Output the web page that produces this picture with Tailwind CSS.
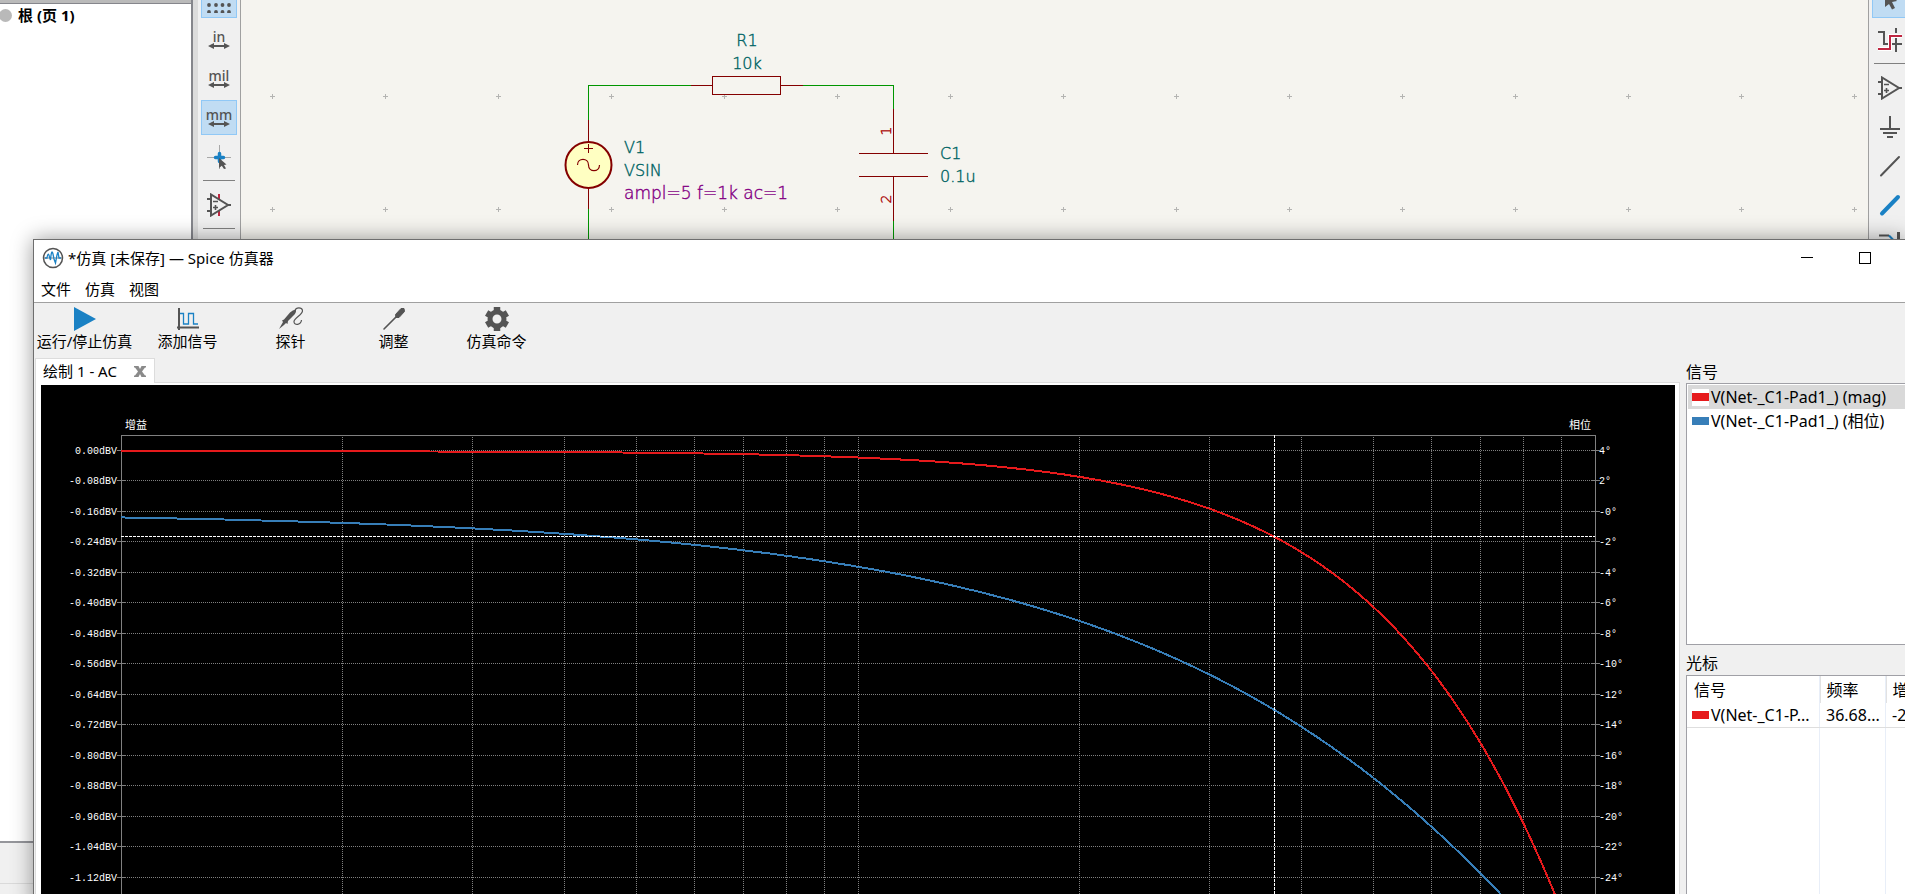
<!DOCTYPE html>
<html lang="zh-CN">
<head>
  <meta charset="UTF-8" />
  <title>Spice 仿真器</title>
  <script src="https://cdn.jsdelivr.net/npm/@tailwindcss/browser@4"></script>
</head>
<body class="relative h-screen overflow-hidden bg-[#f0f0f0] text-[15px] leading-5 text-black font-['Noto_Sans','Noto_Sans_CJK_SC',sans-serif]">

  <!-- 原理图编辑器 -->
  <main class="flex h-full">
    <!-- 层次面板 -->
    <aside class="flex w-[193px] flex-none flex-col border-r-2 border-[#85868c]">
      <div class="h-1 border-b border-[#85868c] bg-[#bababa]"></div>
      <div class="flex-1 bg-white">
        <div class="flex items-center gap-[6px] pt-px font-bold">
          <span class="-ml-[1px] h-[13px] w-[13px] rounded-full bg-[#b9b9b9]"></span>
          <span>根 (页 1)</span>
        </div>
      </div>
      <div class="h-[53px] flex-none border-t-2 border-[#95969b]">
        <div class="mt-10 border-t border-[#dadada]"></div>
      </div>
    </aside>
    <div class="w-[5px] flex-none bg-[#dcdcdc]"></div>

    <!-- 左侧工具栏 -->
    <div class="flex w-[43px] flex-none flex-col items-center border-r border-[#a0a0a0]">
      <div class="-mt-[17px] flex flex-col items-center gap-1 text-[#545454]">
        <button aria-label="网格" class="flex h-[35px] w-9 items-center justify-center border border-[#90c8f6] bg-[#c0dcf3]">
          <svg width="24" height="24" fill="#545454">
            <g id="dots">
              <circle cx="2" cy="16" r="1.9" /><circle cx="9" cy="16" r="1.9" /><circle cx="15.500" cy="16" r="1.9" /><circle cx="22" cy="16" r="1.9" />
            </g>
            <use href="#dots" y="7" /><use href="#dots" y="-7" /><use href="#dots" y="-14" />
          </svg>
        </button>
        <button class="flex h-[35px] w-9 flex-col items-center justify-center text-[14px] leading-3 font-medium">in
          <svg width="22" height="6" fill="#545454"><path d="M0 3 L6 0 V2 H16 V0 L22 3 L16 6 V4 H6 V6Z" /></svg>
        </button>
        <button class="flex h-[35px] w-9 flex-col items-center justify-center text-[14px] leading-3 font-medium">mil
          <svg width="22" height="6" fill="#545454"><path d="M0 3 L6 0 V2 H16 V0 L22 3 L16 6 V4 H6 V6Z" /></svg>
        </button>
        <button class="flex h-[35px] w-9 flex-col items-center justify-center border border-[#90c8f6] bg-[#c0dcf3] text-[14px] leading-3 font-medium">mm
          <svg width="22" height="6" fill="#545454"><path d="M0 3 L6 0 V2 H16 V0 L22 3 L16 6 V4 H6 V6Z" /></svg>
        </button>
        <button aria-label="光标形状" class="flex h-[35px] w-9 items-center justify-center">
          <svg width="24" height="24">
            <path d="M12.500 0 V24 M0 12.500 H24" stroke="#a8a8a8" />
            <path d="M12.500 8.500 V16.500 M8.500 12.500 H16.500" stroke="#1a81c4" stroke-width="3.500" stroke-linecap="round" />
            <path d="M12 13 L19.500 19.500 L17 20 L19 23.500 L17 24 L14.800 20.800 L12 23Z" fill="#545454" />
          </svg>
        </button>
        <div class="my-[2px] h-px w-8 bg-[#808080]"></div>
        <button aria-label="隐藏引脚" class="flex h-[35px] w-9 items-center justify-center">
          <svg width="24" height="24" fill="none" stroke="#545454" stroke-width="2">
            <path d="M12 1 V6 M12 18 V23" stroke="#bf2641" />
            <path d="M0 6 H4 M0 18 H4 M4 1.500 V22.500 L21 12Z M20 12 H24" />
            <path d="M6 8.500 H11 M6 14.500 H11 M8.500 12 V17" stroke-width="1.600" />
          </svg>
        </button>
        <div class="my-[2px] h-px w-8 bg-[#808080]"></div>
      </div>
    </div>

    <!-- 画布 -->
    <section class="min-w-0 flex-1 bg-[#f5f4ef]">
      <svg class="h-full w-full font-extralight font-['DejaVu_Sans',sans-serif]" fill="none" shape-rendering="crispEdges">
        <pattern id="grid" x="26" y="91" width="113" height="113" patternUnits="userSpaceOnUse">
          <path d="M3 5.500 H8 M5.500 3 V8" stroke="#b4b4b2" />
        </pattern>
        <rect width="100%" height="100%" fill="url(#grid)" />
        <path d="M347.500 120 V85.500 H450 M562 85.500 H652.500 V109 M347.500 209 V300 M652.500 221 V300" stroke="#009600" />
        <g stroke="#840000">
          <path d="M450 85.500 H471 M540 85.500 H562 M347.500 120 V142 M347.500 188 V209" />
          <rect x="471.500" y="76.500" width="68" height="18" />
          <path d="M652.500 109 V153 M618 153.500 H687 M618 176.500 H687 M652.500 177 V221" />
          <circle cx="347.500" cy="165" r="23" fill="#ffffc2" stroke-width="2" shape-rendering="auto" />
          <path d="M347.500 144 V153 M343 148.500 H352" />
          <path d="M336.500 165 C336.500 157.500 347.500 157.500 347.500 165 S358.500 172.500 358.500 165" shape-rendering="auto" stroke-width="1.200" />
        </g>
        <g fill="#006464" stroke="#006464" stroke-width="0.400" font-size="16">
          <text x="506" y="46" text-anchor="middle">R1</text>
          <text x="506" y="69" text-anchor="middle">10k</text>
          <text x="383" y="153">V1</text>
          <text x="383" y="176">VSIN</text>
          <text x="699" y="159">C1</text>
          <text x="699" y="182">0.1u</text>
        </g>
        <text x="383" y="199" fill="#840084" stroke="#840084" stroke-width="0.400" font-size="17">ampl=5 f=1k ac=1</text>
        <g fill="#a90000" stroke="#a90000" stroke-width="0.400" font-size="14" text-anchor="middle">
          <text transform="translate(650 131) rotate(-90)">1</text>
          <text transform="translate(650 199) rotate(-90)">2</text>
        </g>
      </svg>
    </section>

    <!-- 右侧工具栏 -->
    <div class="w-[37px] flex-none border-l border-[#a0a0a0] pl-[3px]">
      <div class="-mt-[17px] flex w-9 flex-col items-center gap-1">
        <button aria-label="选择" class="flex h-[35px] w-9 items-center justify-center border border-[#90c8f6] bg-[#c0dcf3]">
          <svg width="24" height="24"><path d="M7 -1 L19 12 L14 13 L17 19 L14 20.500 L11 15 L7 18Z" fill="#545454" /></svg>
        </button>
        <button aria-label="高亮网络" class="flex h-[35px] w-9 items-center justify-center">
          <svg width="24" height="24" fill="none" stroke="#545454" stroke-width="2">
            <path d="M0 4 H6 V16 H10 M18 0 V5 M18 10 V24 M14 16 H24" />
            <path d="M0 21 H12 V8 H24" stroke="#fff" stroke-width="4" />
            <path d="M0 21 H12 V8 H24" stroke="#bf2641" />
          </svg>
        </button>
        <div class="my-[2px] h-px w-8 bg-[#808080]"></div>
        <button aria-label="放置符号" class="flex h-[35px] w-9 items-center justify-center">
          <svg width="24" height="24" fill="none" stroke="#545454" stroke-width="2">
            <path d="M0 6 H4 M0 18 H4 M4 1.500 V22.500 L21 12Z M20 12 H24" />
            <path d="M6 8.500 H11 M6 14.500 H11 M8.500 12 V17" stroke-width="1.600" />
          </svg>
        </button>
        <button aria-label="放置电源" class="flex h-[35px] w-9 items-center justify-center">
          <svg width="24" height="24" stroke="#545454" stroke-width="2"><path d="M12 1 V14 M2 14 H22 M5 18 H19 M9 22 H15" /></svg>
        </button>
        <button aria-label="导线" class="flex h-[35px] w-9 items-center justify-center">
          <svg width="24" height="24" stroke="#545454" stroke-width="2" stroke-linecap="round"><path d="M3 21.500 L21 3" /></svg>
        </button>
        <button aria-label="总线" class="flex h-[35px] w-9 items-center justify-center">
          <svg width="24" height="24" stroke="#1a81c4" stroke-width="4" stroke-linecap="round"><path d="M4 20.500 L20 4" /></svg>
        </button>
        <button aria-label="总线入口" class="flex h-[35px] w-9 items-center justify-center">
          <svg width="24" height="24" fill="none" stroke="#545454" stroke-width="2">
            <path d="M1 3.500 H11" /><path d="M11 3.500 L19 12" stroke="#1a81c4" /><path d="M20.500 0 V24" stroke-width="3" />
          </svg>
        </button>
      </div>
    </div>
  </main>

  <!-- 仿真器窗口 -->
  <div class="absolute -bottom-4 left-[33px] right-0 top-[239px] flex flex-col border-l border-t border-[#6e6e6e] bg-[#f0f0f0] shadow-[0_0_20px_rgba(0,0,0,0.4)]">
    <!-- 标题栏 -->
    <header class="flex h-[37px] flex-none items-center gap-1 bg-white pb-[2px] pl-2 pr-[34px]">
      <svg width="22" height="22" fill="none">
        <circle cx="11" cy="11" r="9.500" stroke="#545454" stroke-width="1.500" />
        <path d="M2 11 H20" stroke="#545454" stroke-width="0.700" />
        <path d="M3 11 H5 Q6 4 7.500 10 L8.500 13 Q9.500 1 11 7 L12 12 L13.500 16 L15 8 L16 5 L17 11 H19" stroke="#1a81c4" stroke-width="1.300" />
      </svg>
      <h1 class="flex-1">*仿真 [未保存] — Spice 仿真器</h1>
      <div class="flex gap-[46px]">
        <button aria-label="最小化" class="flex h-3 w-3 items-center"><span class="h-px w-3 bg-black"></span></button>
        <button aria-label="最大化" class="h-3 w-3 border border-black"></button>
      </div>
    </header>

    <!-- 菜单 -->
    <nav class="flex h-[26px] flex-none items-center gap-[14px] border-b border-[#a0a0a0] bg-white pb-[2px] pl-[7px]">
      <button>文件</button>
      <button>仿真</button>
      <button>视图</button>
    </nav>

    <!-- 工具栏 -->
    <div class="-ml-px flex h-[55px] flex-none pt-1 [&>button]:flex [&>button]:w-[103px] [&>button]:flex-col [&>button]:items-center">
      <button>
        <svg width="24" height="24"><path d="M1 0 V24 L23 12Z" fill="#1a81c4" /></svg>
        <span>运行/停止仿真</span>
      </button>
      <button>
        <svg width="24" height="24" fill="none">
          <path d="M3 1 V23 M1 20.500 H23" stroke="#545454" stroke-width="2" />
          <path d="M4 6.500 H7.500 V17 H12.500 V6.500 H17.500 V17 H22" stroke="#1a81c4" stroke-width="1.300" />
        </svg>
        <span>添加信号</span>
      </button>
      <button>
        <svg width="24" height="24" fill="none">
          <path d="M0 22 L4 15 L3 13.500 L5 12.500 L11 5.500 Q15 2 17 3 Q17.500 6 14 9 L9 14 L8.500 17 L7 16 L5 18Z" fill="#545454" />
          <path d="M16 3.500 C17 0 23 0 23.500 3.500 C24 8 14.500 11 15 15 C15.500 19 22 18 22.500 13" stroke="#545454" stroke-width="1.200" />
        </svg>
        <span>探针</span>
      </button>
      <button>
        <svg width="24" height="24" fill="none" stroke="#545454">
          <path d="M2 22 L15 9" stroke-width="1.600" stroke-linecap="round" />
          <path d="M13.500 7.500 L19 1.500 L22 1.500 L22.500 4.500 L17 10.500 L14 10.500Z" fill="#545454" stroke-width="1" stroke-linejoin="round" />
        </svg>
        <span>调整</span>
      </button>
      <button>
        <svg width="24" height="24" fill="none" stroke="#545454">
          <circle cx="12" cy="12" r="7" stroke-width="5" />
          <path d="M12 0 V4 M12 20 V24 M1.600 6 L5 8 M19 16 L22.400 18 M1.600 18 L5 16 M19 8 L22.400 6" stroke-width="6.500" />
        </svg>
        <span>仿真命令</span>
      </button>
    </div>

    <div class="flex min-h-0 flex-1">
      <!-- 绘图区 -->
      <section class="flex min-w-0 flex-1 flex-col pl-px">
        <div class="relative z-10 -mb-px flex h-[25px] w-[120px] flex-none items-center justify-between border border-b-0 border-[#dcdcdc] bg-white pl-[7px] pr-2">
          <span>绘制 1 - AC</span>
          <button aria-label="关闭">
            <svg width="12" height="11" fill="#8a8a8a"><path d="M0 0 H4.500 L6 3 L7.500 0 H12 V1.500 H11 L8 5.500 L11 9.500 H12 V11 H7.500 L6 8 L4.500 11 H0 V9.500 H1 L4 5.500 L1 1.500 H0Z" /></svg>
          </button>
        </div>
        <div class="min-h-0 flex-1 border border-[#dcdcdc] bg-white pl-[5px] pr-1 pt-[2px]">
          <svg id="plot" class="h-full w-full bg-black font-['Liberation_Mono','Noto_Sans_CJK_SC',monospace]" fill="none" shape-rendering="crispEdges"></svg>
        </div>
      </section>

      <!-- 信号与光标 -->
      <aside class="ml-[6px] flex w-[219px] flex-none flex-col text-base leading-6">
        <h2 class="pt-[3px] leading-[22px]">信号</h2>
        <ul class="h-[262px] flex-none border border-r-0 border-[#a0a0a6] bg-white py-px pl-px">
          <li class="flex items-center gap-[2px] bg-[#d9d9d9] pl-1"><span class="flex h-[17px] w-[17px] items-center bg-white"><i class="h-2 w-full bg-[#e61a1c]"></i></span>V(Net-_C1-Pad1_) (mag)</li>
          <li class="flex items-center gap-[2px] pl-1"><span class="h-2 w-[17px] bg-[#377eb8]"></span>V(Net-_C1-Pad1_) (相位)</li>
        </ul>
        <h2 class="pt-[7px] leading-[23px]">光标</h2>
        <div class="relative min-h-0 flex-1 border border-b-0 border-r-0 border-[#a0a0a6] bg-white">
          <div class="absolute inset-y-0 left-[132px] w-[67px] border-x border-[#e8eef8]"></div>
          <table class="relative w-full table-fixed border-collapse text-left">
            <thead>
              <tr class="h-[27px]">
                <th class="w-[133px] border-r border-[#e2e2e2] pl-[7px] font-normal">信号</th>
                <th class="w-[66px] border-r border-[#e2e2e2] pl-[6px] font-normal">频率</th>
                <th class="overflow-hidden whitespace-nowrap pl-[6px] font-normal">增益</th>
              </tr>
            </thead>
            <tbody>
              <tr class="border-b border-[#dedede]">
                <td class="pl-[5px]"><div class="flex items-center gap-[2px] whitespace-nowrap"><i class="h-2 w-[17px] bg-[#e61a1c]"></i>V(Net-_C1-P...</div></td>
                <td class="pl-[6px]">36.68...</td>
                <td class="overflow-hidden whitespace-nowrap pl-[6px]">-224.9m</td>
              </tr>
            </tbody>
          </table>
        </div>
      </aside>
    </div>
  </div>

  <!-- 低通滤波器 AC 曲线 -->
  <script>
    const svg = document.getElementById("plot");
    const LEFT = 80, TOP = 50, ZERO = 65;
    const STEP = 30.48;      // 每格像素
    const RC = 10e3 * 0.1e-6;

    function add(tag, attrs, text) {
      const el = document.createElementNS("http://www.w3.org/2000/svg", tag);
      for (const k in attrs) el.setAttribute(k, attrs[k]);
      if (text) el.textContent = text;
      svg.appendChild(el);
    }

    function draw() {
      svg.replaceChildren();
      const box = svg.getBoundingClientRect();
      const right = Math.round(box.width) - 80;
      const bottom = Math.round(box.height);
      const px = f => LEFT + (right - LEFT) * Math.log10(f) / 2;

      // 网格
      let dots = "";
      for (const d of [1, 10]) {
        for (let n = 1; n < 10; n++) {
          if (n * d > 1) dots += `M${Math.floor(px(n * d)) + 0.5} ${TOP} V${bottom}`;
        }
      }
      let ticks = `M${LEFT + 0.5} ${bottom} V${TOP + 0.5} H${right + 0.5} V${bottom}`;
      for (let i = 0; ZERO + i * STEP < bottom; i++) {
        const y = Math.round(ZERO + i * STEP) + 0.5;
        dots += `M${LEFT} ${y} H${right}`;
        ticks += `M${LEFT - 4} ${y} H${LEFT + 5} M${right - 4} ${y} H${right + 5}`;
        const deg = 4 - 2 * i;
        add("text", { x: LEFT - 4, y: y + 3, fill: "#fff", "font-size": 10, "text-anchor": "end" }, (i ? "-" : "") + (i * 0.08).toFixed(2) + "dBV");
        add("text", { x: right + 4, y: y + 3, fill: "#fff", "font-size": 10 }, (deg === 0 ? "-0" : deg) + "°");
      }
      add("path", { d: dots, stroke: "#808080", "stroke-dasharray": "1 1" });
      add("path", { d: ticks, stroke: "#808080" });
      add("text", { x: LEFT + 4, y: TOP - 6, fill: "#fff", "font-size": 11 }, "增益");
      add("text", { x: right - 4, y: TOP - 6, fill: "#fff", "font-size": 11, "text-anchor": "end" }, "相位");

      // 幅度与相位
      let mag = "", phase = "";
      for (let i = 0; i <= 200; i++) {
        const f = Math.pow(10, i / 100);
        const w = 2 * Math.PI * f * RC;
        const x = px(f).toFixed(1);
        mag += (i ? "L" : "M") + x + " " + (ZERO + 1 + 10 * Math.log10(1 + w * w) * STEP / 0.08).toFixed(1);
        phase += (i ? "L" : "M") + x + " " + (ZERO + 1 + (4 + Math.atan(w) * 180 / Math.PI) * STEP / 2).toFixed(1);
      }
      add("path", { d: phase, stroke: "#377eb8", "stroke-width": 2 });
      add("path", { d: mag, stroke: "#e61a1c", "stroke-width": 2 });

      // 光标
      const cx = Math.round(px(36.68)) + 0.5;
      add("path", { d: `M${LEFT} 151.5 H${right} M${cx} ${TOP} V${bottom}`, stroke: "#fff", "stroke-dasharray": "3 1" });
    }
    new ResizeObserver(draw).observe(svg.parentElement);
    window.addEventListener("load", draw);
  </script>
</body>
</html>
